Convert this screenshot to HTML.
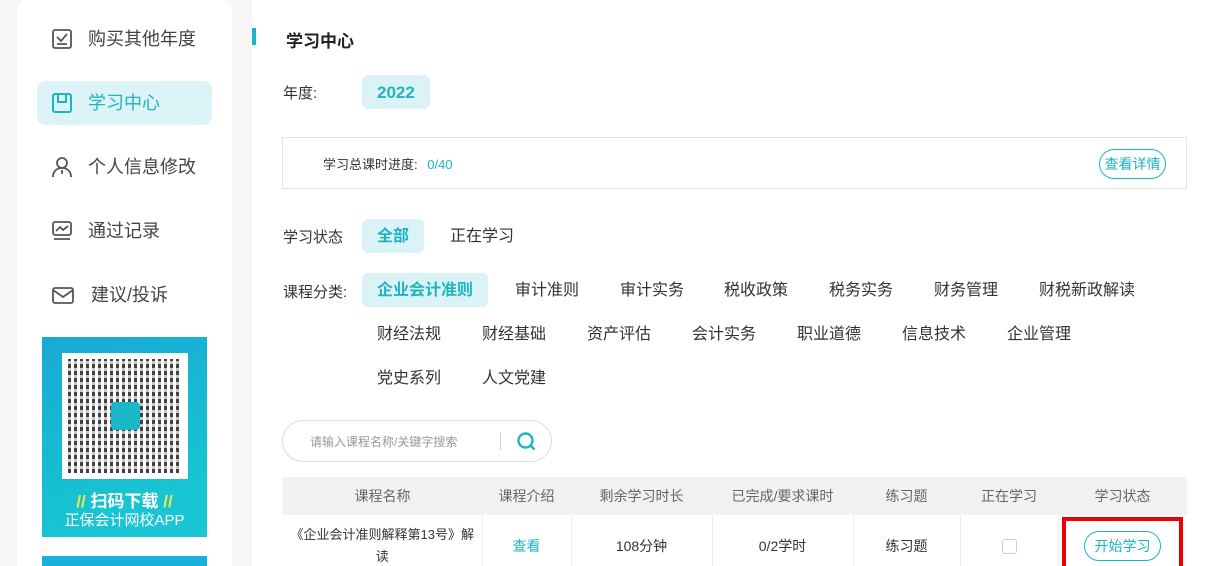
<!DOCTYPE html>
<html><head><meta charset="utf-8"><style>
*{margin:0;padding:0;box-sizing:border-box}
html,body{width:1208px;height:566px;overflow:hidden}
body{background:#f6f6f6;font-family:"Liberation Sans","Noto Sans CJK SC",sans-serif;color:#333;position:relative}
.a{position:absolute}
.side{left:17px;top:0;width:215px;height:566px;background:#fff;border-radius:10px 10px 0 0}
.nav{left:37px;width:175px;height:44px;font-size:18px;color:#444;line-height:44px}
.nav span{position:absolute;left:51px}
.nav svg{position:absolute;left:14px;top:11px}
.main{left:252px;top:0;width:956px;height:566px;background:#fff}
.chip{position:absolute;height:34px;line-height:36px;font-size:16px;color:#333;white-space:nowrap}
.on{background:#dbf2f7;color:#1db4c3;border-radius:6px;font-weight:bold;padding:0 15px}
td,th{font-size:14px;text-align:center;font-weight:normal;color:#666}
</style></head><body>
<div class="a side"></div>
<div class="a nav" style="top:17px"><svg width="22" height="22" viewBox="0 0 22 22" fill="none" stroke="#555" stroke-width="1.8"><rect x="2" y="2" width="18" height="18" rx="2"/><path d="M6 9l4 4 6-7M6 16h10"/></svg><span>购买其他年度</span></div>
<div class="a nav" style="top:81px;background:#dcf3f8;border-radius:8px;color:#1db4c3"><svg width="22" height="22" viewBox="0 0 22 22" fill="none" stroke="#1db4c3" stroke-width="2"><rect x="2" y="2" width="18" height="18" rx="2"/><path d="M7 2v8h8V2"/></svg><span>学习中心</span></div>
<div class="a nav" style="top:145px"><svg width="22" height="22" viewBox="0 0 22 22" fill="none" stroke="#555" stroke-width="1.8"><circle cx="11" cy="7" r="5"/><path d="M2 21c0-6 4-9 9-9s9 3 9 9M11 14v4"/></svg><span>个人信息修改</span></div>
<div class="a nav" style="top:209px"><svg width="22" height="22" viewBox="0 0 22 22" fill="none" stroke="#555" stroke-width="1.8"><rect x="2" y="2" width="18" height="13" rx="2"/><path d="M5 11l4-4 3 3 5-4M3 19h16"/></svg><span>通过记录</span></div>
<div class="a nav" style="top:273px"><svg width="24" height="22" viewBox="0 0 24 22" fill="none" stroke="#555" stroke-width="1.8"><rect x="2" y="4" width="20" height="15" rx="2"/><path d="M2 6l10 7 10-7"/></svg><span style="left:54px">建议/投诉</span></div>
<div class="a" style="left:42px;top:337px;width:165px;height:200px;background:linear-gradient(160deg,#1aa8d6,#16c0d0 60%,#1bc7d6)"></div>
<div class="a" style="left:62px;top:353px;width:126px;height:126px;background:#fff"></div>
<div class="a" style="left:68px;top:359px;width:114px;height:114px;background:repeating-linear-gradient(90deg,#222 0 3px,#fff 3px 6px),#222;opacity:.85"></div>
<div class="a" style="left:68px;top:359px;width:114px;height:114px;background:repeating-linear-gradient(0deg,transparent 0 4px,rgba(255,255,255,.7) 4px 7px)"></div>
<div class="a" style="left:111px;top:402px;width:29px;height:28px;background:#19b7c9;border-radius:4px"></div>
<div class="a" style="left:42px;top:487px;width:165px;text-align:center;color:#fff;font-weight:bold;font-size:17px"><span style="color:#f0e84a">//</span> 扫码下载 <span style="color:#f0e84a">//</span></div>
<div class="a" style="left:42px;top:509px;width:165px;text-align:center;color:#fff;font-size:15px">正保会计网校APP</div>
<div class="a" style="left:42px;top:556px;width:165px;height:10px;background:#1ab0dc"></div>

<div class="a main"></div>
<div class="a" style="left:252px;top:28px;width:4px;height:17px;background:#1db4c3"></div>
<div class="a" style="left:286px;top:27px;font-size:17px;font-weight:bold;color:#222">学习中心</div>
<div class="a" style="left:283px;top:82px;font-size:15px">年度:</div>
<div class="a chip on" style="left:362px;top:75px;font-size:17px">2022</div>
<div class="a" style="left:282px;top:137px;width:905px;height:52px;border:1px solid #e3e3e3"></div>
<div class="a" style="left:323px;top:154px;font-size:13px">学习总课时进度: <span style="color:#1db4c3;margin-left:6px">0/40</span></div>
<div class="a" style="left:1099px;top:149px;width:67px;height:30px;border:1px solid #1db4c3;border-radius:15px;color:#1db4c3;font-size:14px;text-align:center;line-height:28px">查看详情</div>
<div class="a" style="left:283px;top:226px;font-size:15px">学习状态</div>
<div class="chip on" style="left:362px;top:219px">全部</div>
<div class="chip" style="left:450px;top:219px">正在学习</div>
<div class="a" style="left:283px;top:281px;font-size:15px">课程分类:</div>
<div class="chip on" style="left:362px;top:273px">企业会计准则</div>
<div class="chip" style="left:515px;top:273px">审计准则</div>
<div class="chip" style="left:620px;top:273px">审计实务</div>
<div class="chip" style="left:724px;top:273px">税收政策</div>
<div class="chip" style="left:829px;top:273px">税务实务</div>
<div class="chip" style="left:934px;top:273px">财务管理</div>
<div class="chip" style="left:1039px;top:273px">财税新政解读</div>
<div class="chip" style="left:377px;top:317px">财经法规</div>
<div class="chip" style="left:482px;top:317px">财经基础</div>
<div class="chip" style="left:587px;top:317px">资产评估</div>
<div class="chip" style="left:692px;top:317px">会计实务</div>
<div class="chip" style="left:797px;top:317px">职业道德</div>
<div class="chip" style="left:902px;top:317px">信息技术</div>
<div class="chip" style="left:1007px;top:317px">企业管理</div>
<div class="chip" style="left:377px;top:361px">党史系列</div>
<div class="chip" style="left:482px;top:361px">人文党建</div>
<div class="a" style="left:282px;top:420px;width:270px;height:42px;border:1px solid #ddd;border-radius:21px"></div>
<div class="a" style="left:310px;top:433px;font-size:12px;color:#999">请输入课程名称/关键字搜索</div>
<div class="a" style="left:500px;top:432px;width:1px;height:18px;background:#ccc"></div>
<svg class="a" style="left:516px;top:431px" width="21" height="21" viewBox="0 0 21 21" fill="none" stroke="#1db4c3" stroke-width="2.4"><circle cx="9.5" cy="9.5" r="7"/><path d="M14.5 14.5l4 4"/></svg>
<table class="a" style="left:283px;top:477px;width:904px;border-collapse:collapse;table-layout:fixed">
<colgroup><col style="width:199px"><col style="width:89px"><col style="width:141px"><col style="width:141px"><col style="width:107px"><col style="width:98px"><col style="width:129px"></colgroup>
<tr style="background:#f1f1f1;height:38px"><th>课程名称</th><th>课程介绍</th><th>剩余学习时长</th><th>已完成/要求课时</th><th>练习题</th><th>正在学习</th><th>学习状态</th></tr>
<tr style="height:62px"><td style="border-right:1px solid #eee;color:#333;line-height:22px;font-size:13px;white-space:nowrap">《企业会计准则解释第13号》解<br>读</td><td style="border-right:1px solid #eee;color:#1db4c3">查看</td><td style="border-right:1px solid #eee;color:#333">108分钟</td><td style="border-right:1px solid #eee;color:#333">0/2学时</td><td style="border-right:1px solid #eee;color:#333">练习题</td><td style="border-right:1px solid #eee"><span style="display:inline-block;width:15px;height:15px;border:1px solid #ccc;border-radius:3px;vertical-align:middle"></span></td><td></td></tr>
</table>
<div class="a" style="left:1062px;top:517px;width:121px;height:49px;border:4px solid #e00;border-bottom:none"></div>
<div class="a" style="left:1084px;top:531px;width:77px;height:30px;border:1px solid #1db4c3;border-radius:15px;color:#1db4c3;font-size:14px;text-align:center;line-height:28px">开始学习</div>
</body></html>
